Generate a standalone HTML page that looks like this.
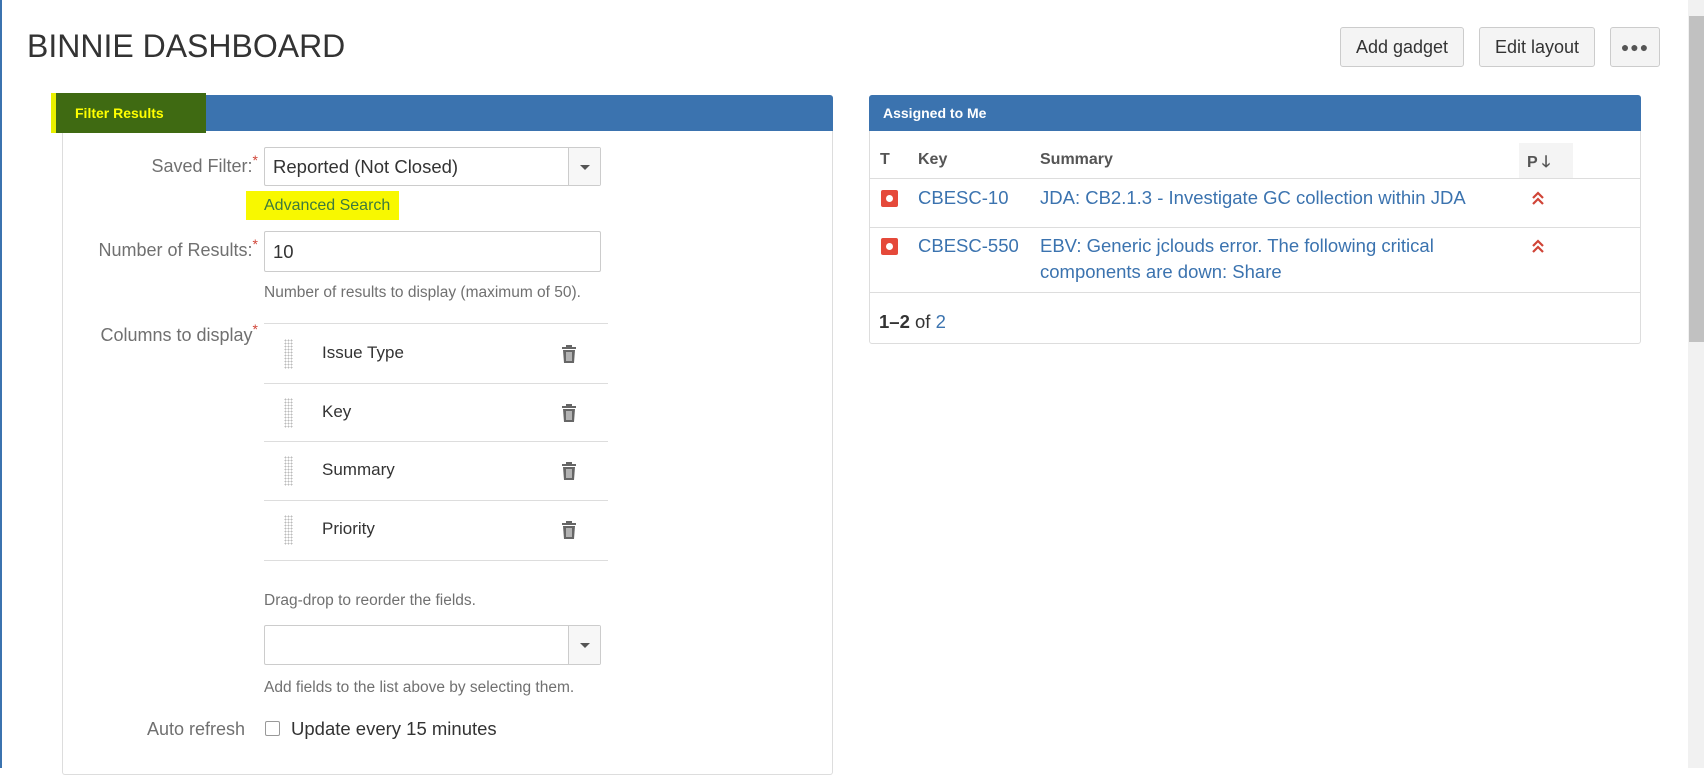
<!DOCTYPE html>
<html><head><meta charset="utf-8"><style>
*{box-sizing:border-box;margin:0;padding:0}
body{width:1704px;height:768px;overflow:hidden;background:#fff;font-family:"Liberation Sans",Arial,sans-serif;color:#333;position:relative}
.a{position:absolute}
.btn{position:absolute;top:27px;height:40px;border:1px solid #ccc;border-radius:3px;background:#f4f4f4;font-size:18px;color:#333;display:flex;align-items:center;justify-content:center}
.lbl{position:absolute;font-size:18px;color:#707070;text-align:right;right:calc(1704px - 258px)}
.star{color:#d04437;font-size:14px;vertical-align:top;position:relative;top:-4px}
.inp{position:absolute;left:264px;width:337px;border:1px solid #ccc;border-radius:2px;background:#fff;font-size:18.5px;color:#333;padding-left:8px;display:flex;align-items:center}
.dd{position:absolute;right:0;top:0;bottom:0;width:32px;border-left:1px solid #ccc;background:#f7f7f7}
.dd:after{content:"";position:absolute;left:11px;top:50%;margin-top:-2px;border:5px solid transparent;border-top-color:#555;border-bottom:0}
.help{position:absolute;left:264px;font-size:15.5px;color:#707070}
.row{position:absolute;left:264px;width:344px;height:59px}
.row .h{position:absolute;left:20px;top:15px;width:9px;height:30px;background-image:radial-gradient(#bbb 45%,transparent 50%);background-size:3px 3px}
.row .t{position:absolute;left:58px;top:19px;font-size:17px;color:#333}
.row .tr{position:absolute;left:297px;top:21px}
.line{position:absolute;left:264px;width:344px;height:1px;background:#ddd}
.th{position:absolute;top:151px;font-size:16px;font-weight:bold;color:#555}
.lnk{color:#3b73af}
.td{position:absolute;font-size:18.5px}
.ico{position:absolute;width:17px;height:17px;background:#e5493a;border-radius:2px}
.ico:after{content:"";position:absolute;left:5px;top:5px;width:7px;height:7px;border-radius:50%;background:#fff}
</style></head><body>
<div class="a" style="left:0;top:0;width:2px;height:768px;background:#3b73af"></div>
<div class="a" style="left:27px;top:28px;font-size:32px;color:#333">BINNIE DASHBOARD</div>
<div class="btn" style="left:1340px;width:124px">Add gadget</div>
<div class="btn" style="left:1479px;width:116px">Edit layout</div>
<div class="btn" style="left:1610px;width:50px;font-size:14px;letter-spacing:1px;color:#555">●●●</div>
<div class="a" style="left:1688px;top:0;width:16px;height:768px;background:#f1f1f1"></div>
<div class="a" style="left:1689px;top:16px;width:15px;height:326px;background:#c1c1c1"></div>

<!-- left panel -->
<div class="a" style="left:62px;top:95px;width:771px;height:680px;border:1px solid #ddd;border-top:0;border-radius:3px"></div>
<div class="a" style="left:62px;top:95px;width:771px;height:36px;background:#3b73af;border-radius:3px 3px 0 0"></div>
<div class="a" style="left:51px;top:93px;width:155px;height:40px;background:#3f6a12;border-left:5px solid #e8f000"></div>
<div class="a" style="left:75px;top:105px;font-size:14px;font-weight:bold;color:#ffff00">Filter Results</div>

<div class="lbl" style="top:156px">Saved Filter:<span class="star">*</span></div>
<div class="inp" style="top:147px;height:39px">Reported (Not Closed)<div class="dd"></div></div>
<div class="a" style="left:246px;top:191px;width:153px;height:29px;background:#f8f800"></div>
<div class="a" style="left:264px;top:197px;font-size:16px;color:#3d7a3d">Advanced Search</div>

<div class="lbl" style="top:240px">Number of Results:<span class="star">*</span></div>
<div class="inp" style="top:231px;height:41px">10</div>
<div class="help" style="top:284px">Number of results to display (maximum of 50).</div>

<div class="lbl" style="top:325px">Columns to display<span class="star">*</span></div>
<div class="line" style="top:323px"></div>
<div class="row" style="top:324px"><div class="h"></div><div class="t">Issue Type</div><svg class="tr" width="16" height="18" viewBox="0 0 16 18"><rect x="1" y="2" width="14" height="2" fill="#666"/><rect x="5" y="0" width="6" height="3" fill="#666"/><path d="M2 5h12l-1 13H3z" fill="#666"/><path d="M6 7v9M8 7v9M10 7v9" stroke="#fff" stroke-width="1"/></svg></div>
<div class="line" style="top:383px"></div>
<div class="row" style="top:383px"><div class="h"></div><div class="t">Key</div><svg class="tr" width="16" height="18" viewBox="0 0 16 18"><rect x="1" y="2" width="14" height="2" fill="#666"/><rect x="5" y="0" width="6" height="3" fill="#666"/><path d="M2 5h12l-1 13H3z" fill="#666"/><path d="M6 7v9M8 7v9M10 7v9" stroke="#fff" stroke-width="1"/></svg></div>
<div class="line" style="top:441px"></div>
<div class="row" style="top:441px"><div class="h"></div><div class="t">Summary</div><svg class="tr" width="16" height="18" viewBox="0 0 16 18"><rect x="1" y="2" width="14" height="2" fill="#666"/><rect x="5" y="0" width="6" height="3" fill="#666"/><path d="M2 5h12l-1 13H3z" fill="#666"/><path d="M6 7v9M8 7v9M10 7v9" stroke="#fff" stroke-width="1"/></svg></div>
<div class="line" style="top:500px"></div>
<div class="row" style="top:500px"><div class="h"></div><div class="t">Priority</div><svg class="tr" width="16" height="18" viewBox="0 0 16 18"><rect x="1" y="2" width="14" height="2" fill="#666"/><rect x="5" y="0" width="6" height="3" fill="#666"/><path d="M2 5h12l-1 13H3z" fill="#666"/><path d="M6 7v9M8 7v9M10 7v9" stroke="#fff" stroke-width="1"/></svg></div>
<div class="line" style="top:560px"></div>

<div class="help" style="top:592px">Drag-drop to reorder the fields.</div>
<div class="inp" style="top:625px;height:40px"><div class="dd"></div></div>
<div class="help" style="top:679px">Add fields to the list above by selecting them.</div>
<div class="lbl" style="top:719px;right:calc(1704px - 245px)">Auto refresh</div>
<div class="a" style="left:265px;top:721px;width:15px;height:15px;border:1px solid #999;border-radius:2px;background:#fff"></div>
<div class="a" style="left:291px;top:718px;font-size:18.5px;color:#333">Update every 15 minutes</div>

<!-- right panel -->
<div class="a" style="left:869px;top:95px;width:772px;height:249px;border:1px solid #ddd;border-radius:3px"></div>
<div class="a" style="left:869px;top:95px;width:772px;height:36px;background:#3b73af;border-radius:3px 3px 0 0"></div>
<div class="a" style="left:883px;top:105px;font-size:14px;font-weight:bold;color:#fff">Assigned to Me</div>
<div class="a" style="left:1519px;top:143px;width:54px;height:35px;background:#f4f4f4"></div>
<div class="th" style="left:880px">T</div>
<div class="th" style="left:918px">Key</div>
<div class="th" style="left:1040px">Summary</div>
<div class="th" style="left:1527px">P <span style="font-size:16px">🡓</span></div>
<div class="a" style="left:870px;top:178px;width:770px;height:1px;background:#ddd"></div>
<div class="ico" style="left:881px;top:190px"></div>
<div class="td lnk" style="left:918px;top:187px">CBESC-10</div>
<div class="td lnk" style="left:1040px;top:187px">JDA: CB2.1.3 - Investigate GC collection within JDA</div>
<svg class="a" style="left:1531px;top:190px" width="14" height="16" viewBox="0 0 14 16"><path d="M2 8l5-5 5 5M2 14l5-5 5 5" fill="none" stroke="#d04437" stroke-width="2.2"/></svg>
<div class="a" style="left:870px;top:227px;width:770px;height:1px;background:#ddd"></div>
<div class="ico" style="left:881px;top:238px"></div>
<div class="td lnk" style="left:918px;top:235px">CBESC-550</div>
<div class="td lnk" style="left:1040px;top:233px;line-height:26px;width:430px">EBV: Generic jclouds error. The following critical components are down: Share</div>
<svg class="a" style="left:1531px;top:238px" width="14" height="16" viewBox="0 0 14 16"><path d="M2 8l5-5 5 5M2 14l5-5 5 5" fill="none" stroke="#d04437" stroke-width="2.2"/></svg>
<div class="a" style="left:870px;top:292px;width:770px;height:1px;background:#ddd"></div>
<div class="td" style="left:879px;top:311px"><b>1–2</b> of <span class="lnk">2</span></div>
</body></html>
